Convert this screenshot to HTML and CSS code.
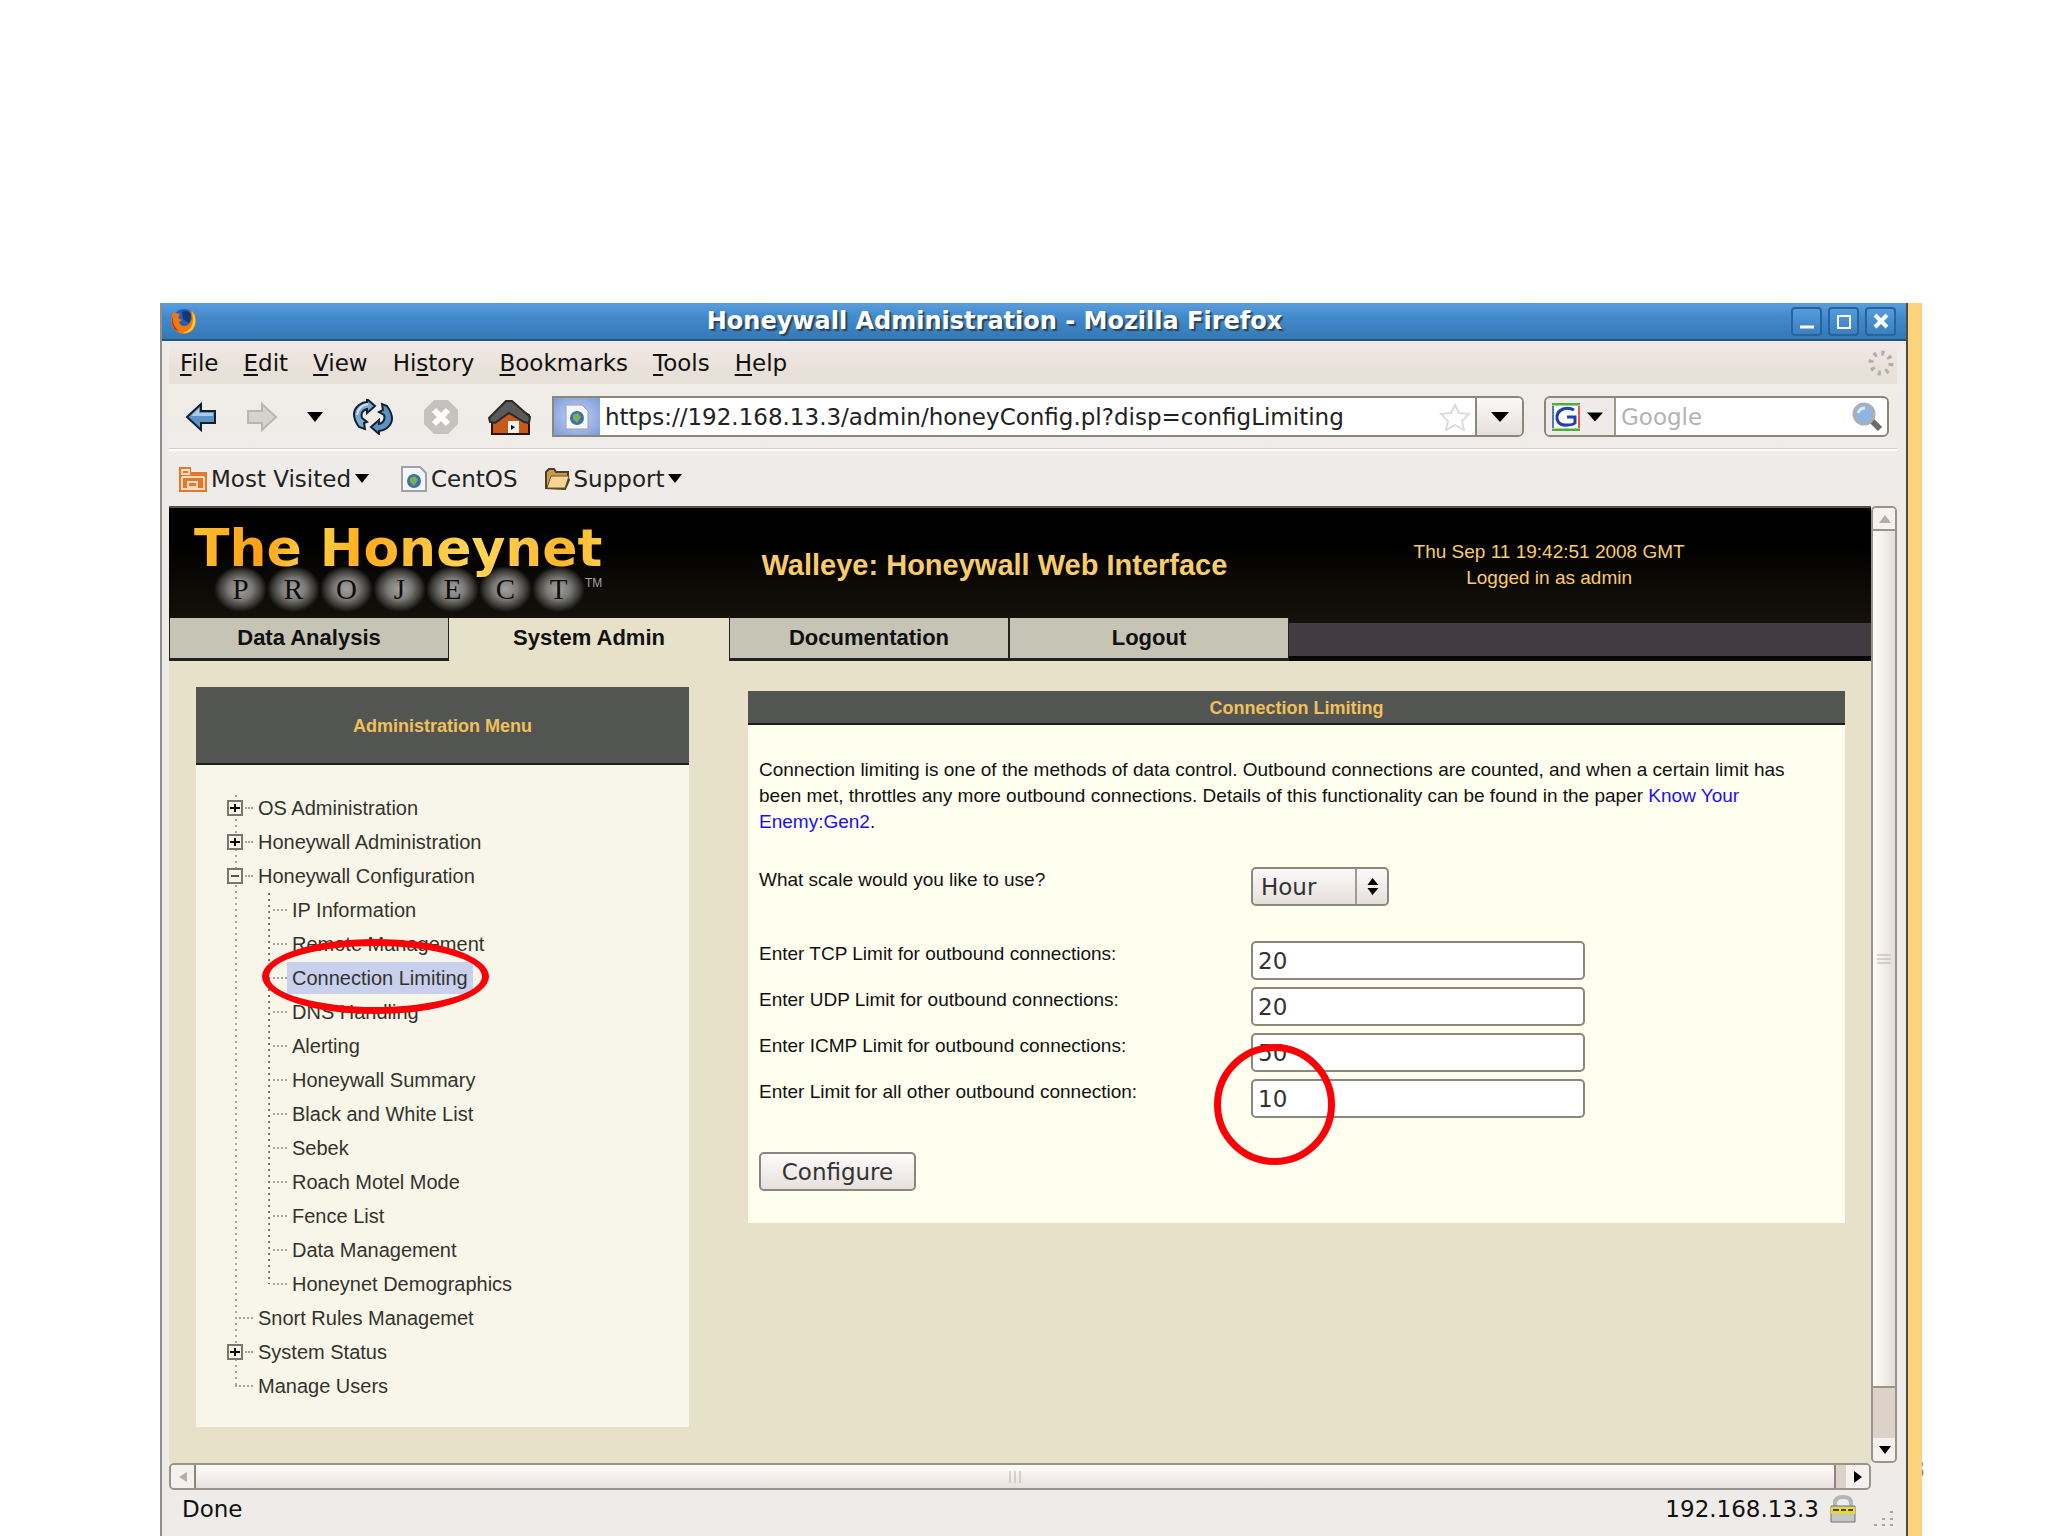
FILE: index.html
```html
<!DOCTYPE html>
<html lang="en">
<head>
    <meta charset="UTF-8">
    <meta name="viewport" content="width=device-width, initial-scale=1.0">
    <title>Honeywall Administration - Mozilla Firefox</title>
    <link rel="stylesheet" href="styles.css">
</head>
<body>
    <div class="backdrop">
        <div class="window">
            <div class="titlebar">
                <svg class="app-icon" width="28" height="28" viewBox="0 0 28 28">
                    <circle cx="14" cy="13" r="11" fill="#2a5db0"/>
                    <path d="M12 5q6-3 10 3l-3 8-6-4z" fill="#123a7a"/>
                    <path d="M3 5q-4 12 2 18 8 7 17 1 6-6 3-17-2-3-5-3 4 9-2 14-7 3-9-3l3-2-4-2 2-4q-5-1-7-2z" fill="#f07a12"/>
                    <path d="M22 4q7 10 0 19-5 4-9 3 10-3 10-13 0-5-1-9z" fill="#fbd23c"/>
                    <path d="M3 9q-1 10 6 15-6-1-7-8 0-4 1-7z" fill="#c8320c"/>
                </svg>
                <h1 class="window-title">Honeywall Administration - Mozilla Firefox</h1>
                <div class="window-buttons">
                    <button type="button" aria-label="Minimize"><svg width="18" height="18" viewBox="0 0 18 18"><path d="M2 15h14" stroke="#fff" stroke-width="3"/></svg></button>
                    <button type="button" aria-label="Maximize"><svg width="18" height="18" viewBox="0 0 18 18"><path d="M2 4h14M3 3v13h12V3" fill="none" stroke="#fff" stroke-width="2"/></svg></button>
                    <button type="button" aria-label="Close"><svg width="18" height="18" viewBox="0 0 18 18"><path d="M3 3l12 12M15 3L3 15" stroke="#fff" stroke-width="4"/></svg></button>
                </div>
            </div>

            <div class="chrome">
                <nav class="menubar">
                    <a href="#"><u>F</u>ile</a>
                    <a href="#"><u>E</u>dit</a>
                    <a href="#"><u>V</u>iew</a>
                    <a href="#">Hi<u>s</u>tory</a>
                    <a href="#"><u>B</u>ookmarks</a>
                    <a href="#"><u>T</u>ools</a>
                    <a href="#"><u>H</u>elp</a>
                    <svg class="throbber" width="28" height="28" viewBox="0 0 28 28">
                        <circle cx="14" cy="14" r="10" fill="none" stroke="#b5adaa" stroke-width="5" stroke-dasharray="3 4.854"/>
                    </svg>
                </nav>

                <div class="toolbar">
                    <div class="nav-buttons">
                        <button type="button" aria-label="Back">
                            <svg width="32" height="32" viewBox="0 0 32 32"><path d="M2 16L16 3v7h14v12H16v7z" fill="#5d93c4" stroke="#10202c" stroke-width="2"/><path d="M6 15l8-8v5h14v3z" fill="#a9cbe6"/></svg>
                        </button>
                        <button type="button" aria-label="Forward">
                            <svg width="32" height="32" viewBox="0 0 32 32"><path d="M30 16L16 3v7H2v12h14v7z" fill="#d5d2cf" stroke="#b9b5b2" stroke-width="2"/></svg>
                        </button>
                        <button type="button" aria-label="History">
                            <svg width="16" height="10" viewBox="0 0 16 10"><path d="M0 0h16L8 10z"/></svg>
                        </button>
                        <button type="button" aria-label="Reload">
                            <svg width="42" height="36" viewBox="0 0 42 36">
                                <path d="M7 28Q-3 14 7 6q4-3 8-3V0l8 7-8 7V10q-7 2-5 9l5 4-3 1 1 6z" fill="#79aad6" stroke="#14222e" stroke-width="2"/>
                                <path d="M35 7q10 14 0 22-4 3-8 3v3l-8-7 8-7v4q7-2 5-9l-5-3 4-2-1-6z" fill="#5c93c6" stroke="#14222e" stroke-width="2"/>
                                <path d="M5 16q1-9 11-11" fill="none" stroke="#cfe2f3" stroke-width="2"/>
                            </svg>
                        </button>
                        <button type="button" aria-label="Stop">
                            <svg width="36" height="34" viewBox="0 0 36 34"><path d="M11 0h14l10 10v14L25 34H11L1 24V10z" fill="#c4c1bf"/><path d="M11 10l14 14M25 10L11 24" stroke="#fff" stroke-width="6"/></svg>
                        </button>
                        <button type="button" aria-label="Home">
                            <svg width="44" height="36" viewBox="0 0 44 36">
                                <path d="M4 18v17h37V16L24 7z" fill="#c8581c" stroke="#2c1205" stroke-width="2"/>
                                <path d="M1 19L18 2l6 0 18 16-1 6-5-1L21 14 7 24l-5-1z" fill="#5b5a58" stroke="#2a2a2a" stroke-width="2"/>
                                <path d="M20 22h11v12H20z" fill="#f5f0f0"/><path d="M23 26v5l4-3z"/>
                            </svg>
                        </button>
                    </div>
                    <div class="url-box">
                        <span class="identity">
                            <svg width="26" height="28" viewBox="0 0 26 26"><path d="M2 1h16l6 6v18H2z" fill="#f6f7f8" stroke="#9aa3ad"/><circle cx="13" cy="14" r="7" fill="#3e6fa8"/><path d="M9 11l5-2 3 4-4 6-4-4z" fill="#7fae52"/></svg>
                        </span>
                        <input type="text" aria-label="Location" value="https://192.168.13.3/admin/honeyConfig.pl?disp=configLimiting">
                        <svg class="star" width="32" height="28" viewBox="0 0 32 28"><path d="M16 2l4 8 10 1-7 7 2 9-9-5-9 5 2-9-7-7 10-1z" fill="#fff" stroke="#dcdcdc" stroke-width="2"/></svg>
                        <button type="button" class="url-drop" aria-label="Show history"><svg width="18" height="10" viewBox="0 0 18 10"><path d="M0 0h18L9 10z"/></svg></button>
                    </div>
                    <div class="search-box">
                        <button type="button" class="engine" aria-label="Search engine">
                            <svg width="28" height="28" viewBox="0 0 28 28">
                                <path d="M1 1h26v26H1z" fill="#fff"/>
                                <path d="M0 1h28M0 27h28" stroke="#4fae3a" stroke-width="3"/>
                                <path d="M1 3v22" stroke="#4a78d8" stroke-width="2"/><path d="M27 3v22" stroke="#e0584c" stroke-width="2"/>
                                <path d="M22 7q-5-3-11-1-7 3-6 10 2 7 10 6 6 0 8-2v-6h-8" fill="none" stroke="#2040b0" stroke-width="3"/>
                            </svg>
                            <svg width="16" height="10" viewBox="0 0 18 10"><path d="M0 0h18L9 10z"/></svg>
                        </button>
                        <input type="text" aria-label="Search" placeholder="Google">
                        <svg class="lens" width="32" height="30" viewBox="0 0 32 30"><path d="M20 18l9 9" stroke="#6d6b66" stroke-width="6"/><circle cx="13" cy="12" r="10" fill="#8fb4e0" stroke="#a9b0b8" stroke-width="3"/><path d="M7 11q2-5 7-5" fill="none" stroke="#dceafa" stroke-width="3"/></svg>
                    </div>
                </div>

                <div class="bookmarks">
                    <a href="#" class="bookmark">
                        <svg width="28" height="26" viewBox="0 0 28 26"><path d="M0 1h12v5h16v20H0z" fill="#e2782a"/><path d="M3 4h7v4H3zM3 11h22M3 11v12h22V11" fill="none" stroke="#fbdcc0" stroke-width="2"/><path d="M9 21v-5h9v5z" fill="none" stroke="#fbdcc0" stroke-width="2"/></svg>
                        Most Visited
                        <svg width="14" height="9" viewBox="0 0 14 9"><path d="M0 0h14L7 9z"/></svg>
                    </a>
                    <a href="#" class="bookmark site">
                        <svg width="26" height="26" viewBox="0 0 26 26"><path d="M1 1h18l6 6v18H1z" fill="#f4f6f7" stroke="#9da2a6" stroke-width="2"/><circle cx="13" cy="15" r="7" fill="#3e6fa8"/><path d="M9 12l5-2 3 4-4 6-4-4z" fill="#7fae52"/></svg>
                        CentOS
                    </a>
                    <a href="#" class="bookmark">
                        <svg width="26" height="22" viewBox="0 0 26 22"><path d="M2 20V4l3-3h5l2 3h12v6l1 2-4 9z" fill="#c99a4c" stroke="#4e3d22" stroke-width="2"/><path d="M3 20L7 8h18l-4 12z" fill="#f7d695" stroke="#6a522c"/></svg>
                        Support
                        <svg width="14" height="9" viewBox="0 0 14 9"><path d="M0 0h14L7 9z"/></svg>
                    </a>
                </div>

                <div class="viewport">
                    <div class="page">
                        <header class="banner">
                            <div class="logo">
                                <div class="logo-name">The Honeynet</div>
                                <div class="logo-sub">
                                    <span>P</span><span>R</span><span>O</span><span>J</span><span>E</span><span>C</span><span>T</span>
                                    <small>TM</small>
                                </div>
                            </div>
                            <h2 class="banner-title">Walleye: Honeywall Web Interface</h2>
                            <p class="session">Thu Sep 11 19:42:51 2008 GMT<br>Logged in as admin</p>
                        </header>
                        <nav class="tabs">
                            <a href="#">Data Analysis</a>
                            <a href="#" class="active">System Admin</a>
                            <a href="#">Documentation</a>
                            <a href="#">Logout</a>
                            <span class="tabs-rest"></span>
                        </nav>

                        <div class="columns">
                            <aside class="sidebar">
                                <h3>Administration Menu</h3>
                                <ul class="tree">
                                    <li class="node"><button type="button" class="toggle" aria-label="Expand"><svg width="10" height="10" viewBox="0 0 10 10"><path d="M0 5h10M5 1v8" stroke="#000" stroke-width="2"/></svg></button><a href="#">OS Administration</a></li>
                                    <li class="node"><button type="button" class="toggle" aria-label="Expand"><svg width="10" height="10" viewBox="0 0 10 10"><path d="M0 5h10M5 1v8" stroke="#000" stroke-width="2"/></svg></button><a href="#">Honeywall Administration</a></li>
                                    <li class="node"><button type="button" class="toggle" aria-label="Collapse"><svg width="10" height="10" viewBox="0 0 10 10"><path d="M1 5h8" stroke="#555" stroke-width="2"/></svg></button><a href="#">Honeywall Configuration</a></li>
                                    <li>
                                        <ul class="subtree">
                                            <li><a href="#">IP Information</a></li>
                                            <li><a href="#">Remote Management</a></li>
                                            <li class="current"><a href="#">Connection Limiting</a><span class="mark mark-menu"></span></li>
                                            <li><a href="#">DNS Handling</a></li>
                                            <li><a href="#">Alerting</a></li>
                                            <li><a href="#">Honeywall Summary</a></li>
                                            <li><a href="#">Black and White List</a></li>
                                            <li><a href="#">Sebek</a></li>
                                            <li><a href="#">Roach Motel Mode</a></li>
                                            <li><a href="#">Fence List</a></li>
                                            <li><a href="#">Data Management</a></li>
                                            <li><a href="#">Honeynet Demographics</a></li>
                                        </ul>
                                    </li>
                                    <li class="node leaf"><a href="#">Snort Rules Managemet</a></li>
                                    <li class="node"><button type="button" class="toggle" aria-label="Expand"><svg width="10" height="10" viewBox="0 0 10 10"><path d="M0 5h10M5 1v8" stroke="#000" stroke-width="2"/></svg></button><a href="#">System Status</a></li>
                                    <li class="node leaf"><a href="#">Manage Users</a></li>
                                </ul>
                            </aside>

                            <main class="panel">
                                <h3>Connection Limiting</h3>
                                <form class="panel-body">
                                    <p>Connection limiting is one of the methods of data control. Outbound connections are counted, and when a certain limit has been met, throttles any more outbound connections. Details of this functionality can be found in the paper <a href="#">Know Your Enemy:Gen2</a>.</p>
                                    <div class="field scale">
                                        <label for="scale">What scale would you like to use?</label>
                                        <div class="select-wrap">
                                            <select id="scale"><option>Hour</option><option>Day</option></select>
                                            <svg class="select-arrows" width="12" height="17" viewBox="0 0 11 17"><path d="M0 7l5-7 6 7zM0 10h11l-6 7z"/></svg>
                                        </div>
                                    </div>
                                    <div class="field">
                                        <label for="tcp">Enter TCP Limit for outbound connections:</label>
                                        <input type="text" id="tcp" value="20">
                                    </div>
                                    <div class="field">
                                        <label for="udp">Enter UDP Limit for outbound connections:</label>
                                        <input type="text" id="udp" value="20">
                                    </div>
                                    <div class="field">
                                        <label for="icmp">Enter ICMP Limit for outbound connections:</label>
                                        <input type="text" id="icmp" value="50">
                                    </div>
                                    <div class="field">
                                        <label for="other">Enter Limit for all other outbound connection:</label>
                                        <div class="marked">
                                            <input type="text" id="other" value="10">
                                            <span class="mark mark-field"></span>
                                        </div>
                                    </div>
                                    <button type="button" class="configure">Configure</button>
                                </form>
                            </main>
                        </div>
                    </div>
                    <div class="vscroll">
                        <span class="scroll-end"><svg width="12" height="8" viewBox="0 0 12 8"><path d="M0 8h12L6 0z" fill="#b3aeaa"/></svg></span>
                        <span class="thumb"><svg width="14" height="10" viewBox="0 0 14 10"><path d="M0 1h14M0 5h14M0 9h14" stroke="#b5afa9"/></svg></span>
                        <span class="scroll-end"><svg width="12" height="8" viewBox="0 0 12 8"><path d="M0 0h12L6 8z"/></svg></span>
                    </div>
                </div>
                <div class="hscroll">
                    <span class="scroll-end"><svg width="8" height="10" viewBox="0 0 8 10"><path d="M8 0v10L0 5z" fill="#b3aeaa"/></svg></span>
                    <span class="thumb"><svg width="14" height="12" viewBox="0 0 14 12"><path d="M2 0v12M7 0v12M12 0v12" stroke="#b5afa9"/></svg></span>
                    <span class="scroll-end"><svg width="8" height="12" viewBox="0 0 8 12"><path d="M0 0v12l8-6z"/></svg></span>
                </div>
                <div class="statusbar">
                    <span>Done</span>
                    <span class="host">192.168.13.3</span>
                    <svg width="26" height="28" viewBox="0 0 26 28"><path d="M5 12V8q0-6 8-6t8 6v4" fill="none" stroke="#b4b7b5" stroke-width="4"/><path d="M1 11h24v16H1z" fill="#c3c6c4" stroke="#6f7270"/><path d="M1 12h24v7H1z" fill="#e6d63a"/><path d="M3 15h6M11 15h5M18 15h5" stroke="#4d4a1c" stroke-width="2"/></svg>
                    <svg class="grip" width="24" height="20" viewBox="0 0 24 20"><path d="M1 17h3M9 17h3M17 17h3M9 11h3M17 11h3M17 4h3" stroke="#aaa5a2" stroke-width="2"/></svg>
                </div>
            </div>
        </div>
    </div>
    <span class="page-number">8</span>
</body>
</html>
```

FILE: styles.css
```css
* {
    box-sizing: border-box;
}
body {
    margin: 0;
    height: 100vh;
    padding: 303px 126px 0 160px;
    background: #fff;
    color: #111;
    font-family: "DejaVu Sans", sans-serif;
    font-size: 23px;
    overflow: hidden;
    position: relative;
}
button {
    font-family: inherit;
    cursor: pointer;
}
h1, h2, h3, p, ul {
    margin: 0;
    padding: 0;
}
ul {
    list-style: none;
}
svg {
    flex: none;
    display: block;
}

/* Window frame */
.backdrop {
    height: 100%;
    padding-right: 14px;
    background: #fdd27c;
    position: relative;
}
.window {
    height: 100%;
    display: flex;
    flex-direction: column;
    background: #efebe9;
    border-left: 2px solid #8e8e8e;
    border-right: 2px solid #4c4c44;
}
.titlebar {
    flex: none;
    height: 38px;
    display: flex;
    align-items: center;
    padding: 0 10px 0 8px;
    background: linear-gradient(#5a9edc, #4289cc 40%, #3579b5);
    border-bottom: 2px solid #24557e;
}
.window-title {
    flex: 1;
    text-align: center;
    color: #fff;
    font-size: 24px;
    font-weight: bold;
    line-height: 30px;
    text-shadow: 2px 2px 1px #2b4257;
}
.window-buttons {
    display: flex;
    gap: 6px;
}
.window-buttons button {
    width: 31px;
    height: 29px;
    padding: 0;
    display: flex;
    align-items: center;
    justify-content: center;
    background: linear-gradient(#559add, #3b80c0);
    border: 2px solid #2a629a;
    border-radius: 4px;
}
.chrome {
    flex: 1;
    min-height: 0;
    display: flex;
    flex-direction: column;
    padding: 0 9px 0 7px;
}

/* Menu bar */
.menubar {
    flex: none;
    height: 43px;
    display: flex;
    align-items: center;
    gap: 25px;
    padding: 0 2px 0 11px;
    background: linear-gradient(#f2eae9, #eae1d9 60%, #e5e0d8);
}
.menubar a {
    color: #111;
    text-decoration: none;
}
.menubar u {
    text-underline-offset: 3px;
}
.throbber {
    margin-left: auto;
}

/* Toolbar */
.toolbar {
    flex: none;
    height: 67px;
    display: flex;
    align-items: center;
    gap: 20px;
    padding: 0 8px 0 16px;
    border-bottom: 2px solid #fff;
    background: linear-gradient(#f0ece6, #eeebe9);
    box-shadow: inset 0 -1px #d3cecb;
}
.nav-buttons {
    display: flex;
    align-items: center;
    gap: 29px;
}
.nav-buttons button {
    padding: 0;
    border: none;
    background: none;
}
.url-box, .search-box {
    height: 41px;
    display: flex;
    align-items: stretch;
    background: #fff;
    border: 2px solid #8b877a;
    border-radius: 6px;
    overflow: hidden;
}
.url-box {
    flex: 1;
    border-top-left-radius: 0;
    border-bottom-left-radius: 0;
}
.search-box {
    width: 345px;
}
.identity {
    width: 46px;
    display: flex;
    align-items: center;
    justify-content: center;
    background: radial-gradient(#c3d3f3, #7d9bdb);
}
.url-box input, .search-box input {
    flex: 1;
    min-width: 0;
    padding: 0 5px;
    border: none;
    background: none;
    color: #222;
    font-family: inherit;
    font-size: 23px;
}
.search-box input::placeholder {
    color: #b3b3b3;
}
.star, .lens {
    align-self: center;
    margin-right: 4px;
}
.url-drop, .engine {
    display: flex;
    align-items: center;
    justify-content: center;
    border: none;
    background: linear-gradient(#fbf9f8, #e6e0dd);
}
.url-drop {
    width: 47px;
    border-left: 2px solid #8b877a;
}
.engine {
    width: 70px;
    padding: 0 6px 0 0;
    gap: 7px;
    background: #f0ebe8;
    border-right: 2px solid #a09c84;
}

/* Bookmarks */
.bookmarks {
    flex: none;
    height: 55px;
    display: flex;
    align-items: center;
    gap: 32px;
    padding-left: 10px;
}
.bookmark {
    display: flex;
    align-items: center;
    gap: 4px;
    color: #222;
    text-decoration: none;
}
.bookmark.site {
    margin-right: -6px;
}

/* Scroll area */
.viewport {
    flex: 1;
    min-height: 0;
    display: flex;
}
.page {
    flex: 1;
    min-width: 0;
    background: #e6e1c8;
    border-top: 2px solid #55504c;
    font-family: "Liberation Sans", Arial, sans-serif;
    overflow: hidden;
}
.vscroll {
    width: 26px;
    display: flex;
    flex-direction: column;
    background: #dcd2c8;
    border: 2px solid #999389;
    border-radius: 5px;
    overflow: hidden;
}
.vscroll .thumb {
    flex: 1;
    margin-bottom: 50px;
    border-bottom: 2px solid #999389;
    background: linear-gradient(to right, #fffdf8, #e4dedb);
}
.thumb, .scroll-end {
    display: flex;
    align-items: center;
    justify-content: center;
}
.scroll-end {
    flex: none;
    width: 23px;
    height: 23px;
    background: #f5f1ef;
}
.vscroll .scroll-end {
    border-bottom: 2px solid #999389;
}
.vscroll .scroll-end:last-child {
    border-bottom: none;
}
.hscroll {
    flex: none;
    height: 27px;
    margin-right: 26px;
    display: flex;
    align-items: stretch;
    background: #dcd2c8;
    border: 2px solid #999389;
    border-radius: 5px;
    overflow: hidden;
}
.hscroll .thumb {
    flex: 1;
    margin-right: 10px;
    border: 2px solid #8d877b;
    border-width: 0 2px;
    background: linear-gradient(#fffdfa, #e8e0de);
}

/* Status bar */
.statusbar {
    flex: none;
    height: 46px;
    display: flex;
    align-items: center;
    gap: 11px;
    padding: 0 0 8px 13px;
}
.host {
    margin-left: auto;
}
.grip {
    align-self: flex-end;
    margin-left: 6px;
}

/* Banner */
.banner {
    height: 110px;
    padding-top: 4px;
    display: grid;
    grid-template-columns: 34% 29% 37%;
    align-items: center;
    background: linear-gradient(#000 30%, #14110a);
    color: #f9cc6a;
}
.logo {
    width: 430px;
    margin-left: 25px;
}
.logo-name {
    position: relative;
    z-index: 1;
    margin-bottom: -12px;
    font-family: "DejaVu Sans", sans-serif;
    font-size: 52px;
    font-weight: bold;
    line-height: 60px;
    white-space: nowrap;
    background: linear-gradient(100deg, #ffc02e, #ff9f14 16%, #ffd34a 28%, #ffab1c 40%, #ffd75c 65%, #ffb62a 85%, #ffd75c);
    background-clip: text;
    -webkit-background-clip: text;
    color: transparent;
}
.logo-sub {
    display: flex;
    align-items: center;
    padding-left: 20px;
    color: #100e0c;
    font-family: "Liberation Serif", serif;
    font-size: 29px;
    line-height: 46px;
}
.logo-sub span {
    width: 53px;
    text-align: center;
    background: radial-gradient(ellipse closest-side, #a3a19d, #7d7b77 45%, #3a3835 80%, transparent);
}
.logo-sub small {
    align-self: flex-start;
    color: #a5a29c;
    font-family: "Liberation Sans", sans-serif;
    font-size: 12px;
    line-height: 34px;
}
.banner-title {
    font-size: 29px;
    text-align: center;
    white-space: nowrap;
}
.session {
    padding-right: 14px;
    font-size: 19px;
    line-height: 26px;
    text-align: center;
}

/* Tabs */
.tabs {
    height: 43px;
    display: grid;
    grid-template-columns: repeat(4, 280px) 1fr;
    background: #14110a;
}
.tabs a {
    display: flex;
    align-items: center;
    justify-content: center;
    background: #c6c4b4;
    border: 2px solid #24221e;
    border-width: 0 1px 3px 1px;
    color: #111;
    font-size: 22px;
    font-weight: bold;
    text-decoration: none;
}
.tabs a.active {
    background: #e6e1c8;
    border-color: #e6e1c8;
}
.tabs-rest {
    margin-top: 5px;
    background: #423c40;
    border-bottom: 5px solid #080606;
}

/* Columns */
.columns {
    display: grid;
    grid-template-columns: 493px 1fr;
    align-items: start;
    gap: 59px;
    padding: 26px 26px 0 27px;
}
.sidebar {
    background: #f8f6e8;
}
.sidebar h3, .panel h3 {
    padding-top: 2px;
    background: #535552;
    border-bottom: 2px solid #1c1c1a;
    color: #f0c05c;
    font-size: 18px;
    text-align: center;
}
.sidebar h3 {
    line-height: 74px;
}

/* Navigation tree */
.tree {
    margin-left: 31px;
    padding: 26px 0 24px;
    background: repeating-linear-gradient(#a5a598 0 2px, transparent 2px 6px) 8px 30px / 2px 590px no-repeat;
}
.tree a {
    padding: 0 5px;
    color: #33332e;
    font-size: 20px;
    line-height: 32px;
    text-decoration: none;
}
.node, .subtree li {
    height: 34px;
    display: flex;
    align-items: center;
}
.node::after, .subtree li::before {
    content: "";
    order: 1;
    border-top: 2px dotted #a5a598;
}
.node::after {
    width: 8px;
    margin-left: 2px;
}
.node.leaf::after {
    width: 18px;
    margin-left: 8px;
}
.toggle {
    width: 16px;
    height: 16px;
    padding: 0;
    display: flex;
    align-items: center;
    justify-content: center;
    background: #f8f6e8;
    border: 2px solid #77776c;
}
.node a {
    order: 2;
}
.subtree {
    margin-left: 41px;
    background: repeating-linear-gradient(#77776c 0 2px, transparent 2px 6px) 0 0 / 2px 391px no-repeat;
}
.subtree li::before {
    width: 14px;
    margin-left: 5px;
    order: 0;
}
.subtree .current {
    position: relative;
}
.current a {
    background: #c9d0ee;
}

/* Settings panel */
.panel {
    margin-top: 4px;
    background: #fffff0;
}
.panel h3 {
    line-height: 30px;
}
.panel-body {
    padding: 32px 11px;
    font-size: 19px;
    line-height: 26px;
}
.panel-body p {
    padding-right: 24px;
}
.panel-body p a {
    color: #1c10f0;
    text-decoration: none;
}
.field {
    display: grid;
    grid-template-columns: 492px 334px;
    align-items: start;
    height: 46px;
}
.field.scale {
    margin-top: 32px;
    height: 74px;
}
.panel input, .panel select, .configure {
    height: 39px;
    border: 2px solid #8b877a;
    border-radius: 5px;
    color: #333;
    font-family: "DejaVu Sans", sans-serif;
    font-size: 23px;
}
.panel input {
    width: 100%;
    padding: 0 5px;
    background: #fff;
}
.select-wrap {
    width: 138px;
    position: relative;
}
.panel select {
    width: 100%;
    padding: 0 8px;
    appearance: none;
    background: linear-gradient(to right, transparent 102px, #a09c92 102px 104px, transparent 104px), linear-gradient(#fbf9f8, #e6e0dd);
}
.select-arrows {
    position: absolute;
    right: 10px;
    top: 11px;
    pointer-events: none;
}
.configure {
    display: block;
    margin-top: 27px;
    width: 157px;
    background: linear-gradient(#fdfbfb, #e6e0dd);
}
.marked {
    position: relative;
}

/* Red highlight rings */
.mark {
    position: absolute;
    border: 7px solid #fb0006;
    border-radius: 50%;
    pointer-events: none;
}
.mark-menu {
    left: -6px;
    top: -22px;
    width: 227px;
    height: 75px;
}
.mark-field {
    left: -37px;
    top: -35px;
    width: 121px;
    height: 121px;
}

.page-number {
    position: absolute;
    right: 123px;
    bottom: 52px;
    z-index: -1;
    color: #888;
    font-size: 24px;
}
```
